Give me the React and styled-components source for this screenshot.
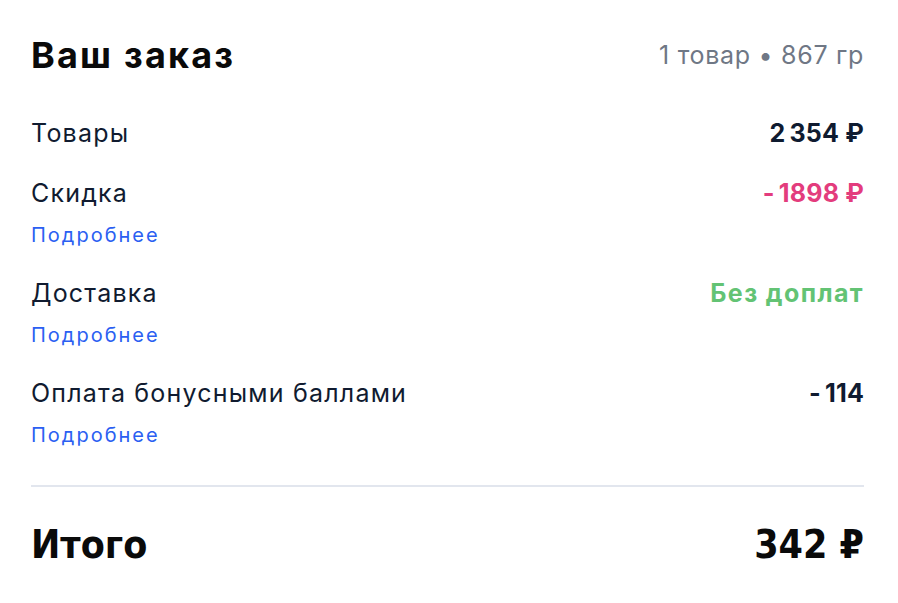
import React from 'react';
import styled, { createGlobalStyle } from 'styled-components';

const GlobalStyle = createGlobalStyle`
  body {
    margin: 0;
    background: #ffffff;
    font-family: Inter, "Noto Sans", sans-serif;
  }
`;

const Card = styled.section`
  width: 833px;
  padding: 35px 34px 30px 31px;
  display: flex;
  flex-direction: column;
`;

const Header = styled.header`
  display: flex;
  justify-content: space-between;
  align-items: center;
  margin-bottom: 42px;
`;

const Title = styled.h1`
  margin: 0;
  font-size: 36px;
  line-height: 40px;
  font-weight: 700;
  color: #0a0a0a;
  letter-spacing: 2.2px;
`;

const Meta = styled.span`
  font-size: 25px;
  line-height: 32px;
  color: #6f7785;
  letter-spacing: 0.7px;
`;

const Rows = styled.div`
  display: flex;
  flex-direction: column;
  gap: 28px;
`;

const Row = styled.div`
  display: flex;
  justify-content: space-between;
  align-items: flex-start;
`;

const LabelCol = styled.div`
  display: flex;
  flex-direction: column;
  gap: 12px;
`;

const Label = styled.span`
  font-size: 25px;
  line-height: 32px;
  color: #101b30;
  letter-spacing: 1.2px;
`;

const More = styled.a`
  font-size: 20px;
  line-height: 28px;
  color: #2b5ff2;
  letter-spacing: 2px;
  text-decoration: none;
  cursor: pointer;
`;

const Value = styled.span`
  font-size: 25px;
  line-height: 32px;
  font-weight: 700;
  letter-spacing: ${({ $tone }) => ($tone === 'green' ? '1.4px' : '0.2px')};
  color: ${({ $tone }) =>
    $tone === 'pink' ? '#e33c7d' : $tone === 'green' ? '#63c374' : '#0f1b30'};
`;

const Divider = styled.hr`
  margin: 36px 0 36px;
  border: none;
  border-top: 2px solid #e2e6ee;
`;

const Total = styled.div`
  display: flex;
  justify-content: space-between;
  align-items: center;
  font-family: "DejaVu Sans Condensed", "Liberation Sans Narrow", "Liberation Sans", sans-serif;
  font-stretch: condensed;
  font-size: 39px;
  line-height: 44px;
  font-weight: 700;
  color: #0a0a0a;
`;

const lines = [
  { label: 'Товары', value: '2\u2009354\u00a0₽' },
  { label: 'Скидка', value: '-\u20091898\u00a0₽', tone: 'pink', more: true },
  { label: 'Доставка', value: 'Без доплат', tone: 'green', more: true },
  { label: 'Оплата бонусными баллами', value: '-\u2009114', more: true },
];

export default function App() {
  return (
    <>
      <GlobalStyle />
      <Card>
        <Header>
          <Title>Ваш заказ</Title>
          <Meta>1 товар • 867 гр</Meta>
        </Header>
        <Rows>
          {lines.map((l) => (
            <Row key={l.label}>
              <LabelCol>
                <Label>{l.label}</Label>
                {l.more && <More>Подробнее</More>}
              </LabelCol>
              <Value $tone={l.tone}>{l.value}</Value>
            </Row>
          ))}
        </Rows>
        <Divider />
        <Total>
          <span>Итого</span>
          <span>342&nbsp;₽</span>
        </Total>
      </Card>
    </>
  );
}
